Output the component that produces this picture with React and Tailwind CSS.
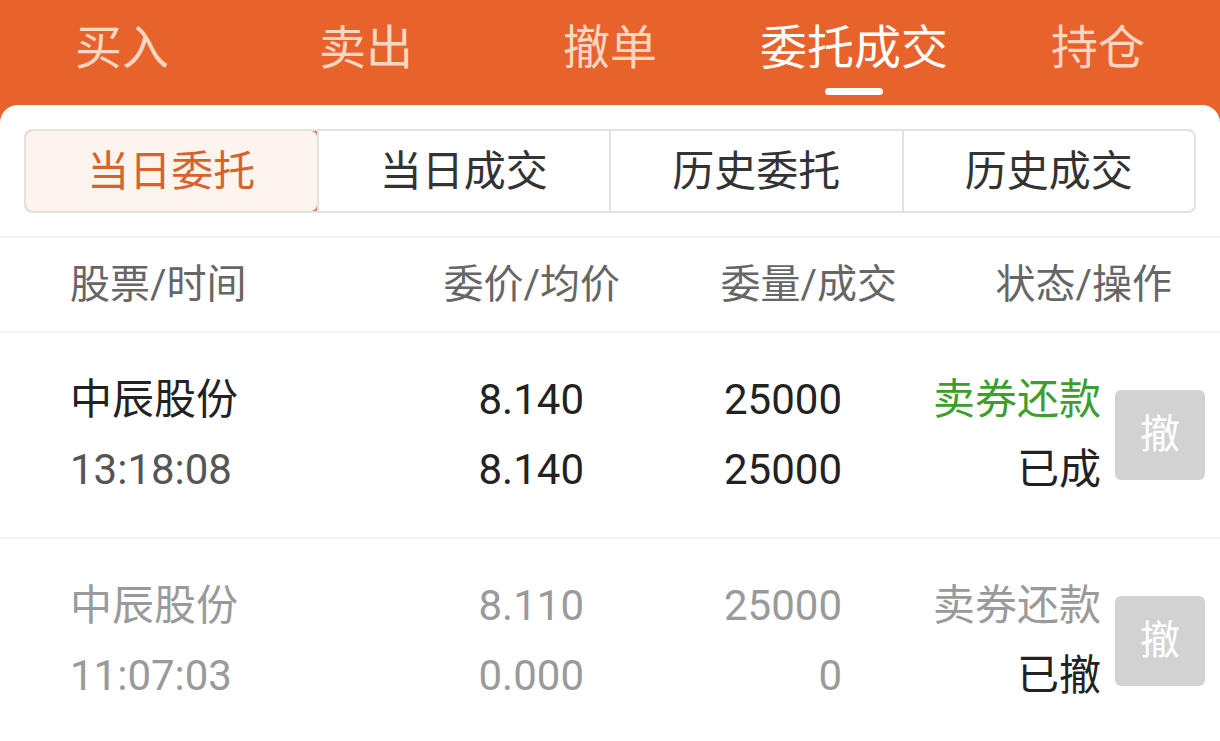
import React from "react";

const topTabs = ["买入", "卖出", "撤单", "委托成交", "持仓"];
const segs = ["当日委托", "当日成交", "历史委托", "历史成交"];

const orders = [
  {
    name: "中辰股份",
    time: "13:18:08",
    price: "8.140",
    avg: "8.140",
    qty: "25000",
    deal: "25000",
    type: "卖券还款",
    status: "已成",
    active: true,
  },
  {
    name: "中辰股份",
    time: "11:07:03",
    price: "8.110",
    avg: "0.000",
    qty: "25000",
    deal: "0",
    type: "卖券还款",
    status: "已撤",
    active: false,
  },
];

const font = { fontFamily: 'Roboto, "Noto Sans CJK SC", sans-serif' };

const OrderRow = ({ o }) => {
  const main = o.active ? "text-[#222222]" : "text-[#9a9a9a]";
  const sub = o.active ? "text-[#555555]" : "text-[#9a9a9a]";
  return (
    <div className="flex items-center h-[206px] border-b-2 border-[#f3f3f3] pl-[70px] pr-[15px] text-[42px] leading-[70px]">
      <div className="flex flex-col w-[200px]">
        <span className={main}>{o.name}</span>
        <span className={sub}>{o.time}</span>
      </div>
      <div className={`flex flex-col items-end w-[314px] ${main}`}>
        <span>{o.price}</span>
        <span>{o.avg}</span>
      </div>
      <div className={`flex flex-col items-end w-[258px] ${main}`}>
        <span>{o.qty}</span>
        <span>{o.deal}</span>
      </div>
      <div className="flex flex-col items-end w-[259px]">
        <span className={o.active ? "text-[#3c9f2b]" : "text-[#9a9a9a]"}>{o.type}</span>
        <span className="text-[#222222]">{o.status}</span>
      </div>
      <button className="ml-[14px] w-[90px] h-[90px] rounded-[6px] bg-[#d2d2d2] text-white text-[40px] flex items-center justify-center">
        撤
      </button>
    </div>
  );
};

const App = () => {
  return (
    <div className="w-[1220px] h-[741px] overflow-hidden bg-[#e8622c]" style={font}>
      <div className="grid grid-cols-5 h-[105px]">
        {topTabs.map((t, i) => (
          <div key={t} className="flex flex-col items-center pt-[18px]">
            <span className={`text-[47px] leading-[60px] ${i === 3 ? "text-white" : "text-[#fbd6c2]"}`}>
              {t}
            </span>
            {i === 3 && <div className="mt-[10px] w-[58px] h-[7px] rounded-full bg-white" />}
          </div>
        ))}
      </div>

      <div className="bg-white rounded-t-[18px] h-[636px]">
        <div className="px-[24px] pt-[24px] pb-[23px]">
          <div className="flex h-[84px] rounded-[8px] border-2 border-[#e2e2e2] overflow-hidden">
            {segs.map((s, i) => (
              <div
                key={s}
                className={`flex-1 flex items-center justify-center text-[42px] ${
                  i === 0
                    ? "bg-[#fdf4ef] text-[#d6632c] border-2 border-[#cf7a4a] rounded-[8px] -m-[2px]"
                    : "text-[#333333] border-l-2 border-[#e2e2e2]"
                } ${i === 1 ? "border-l-0" : ""}`}
              >
                {s}
              </div>
            ))}
          </div>
        </div>

        <div className="flex items-center h-[97px] border-y-2 border-[#f3f3f3] pl-[70px] pr-[48px] text-[40px] text-[#666666]">
          <div className="w-[240px]">股票/时间</div>
          <div className="w-[310px] text-right">委价/均价</div>
          <div className="w-[277px] text-right">委量/成交</div>
          <div className="w-[275px] text-right">状态/操作</div>
        </div>

        {orders.map((o, i) => (
          <OrderRow key={i} o={o} />
        ))}
      </div>
    </div>
  );
};

export default App;
